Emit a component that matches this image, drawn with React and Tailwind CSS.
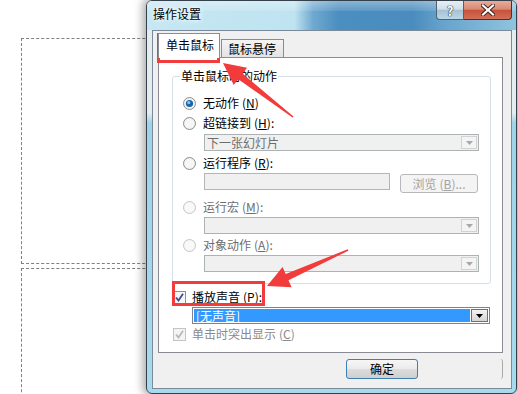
import React from 'react';

// small win7-style controls
function Radio({ checked, disabled }) {
  return (
    <svg width="13" height="13" viewBox="0 0 13 13" className="shrink-0">
      <circle cx="6.5" cy="6.5" r="6" fill={disabled ? '#f6f6f6' : '#eeeeee'} stroke={disabled ? '#c6c6c6' : '#8f8f8f'} />
      <circle cx="6.5" cy="6.5" r="4.6" fill={disabled ? '#f9f9f9' : '#f7f7f7'} />
      {checked && (
        <>
          <circle cx="6.5" cy="6.5" r="3.6" fill="#1a64a8" />
          <circle cx="5.8" cy="5.6" r="1.6" fill="#7ccaf2" />
        </>
      )}
    </svg>
  );
}

function Check({ disabled }) {
  return (
    <svg width="13" height="13" viewBox="0 0 13 13" className="shrink-0">
      <rect x="0.5" y="0.5" width="12" height="12" fill={disabled ? '#f4f4f4' : '#f6f6f6'} stroke={disabled ? '#c4c4c4' : '#8e8f8f'} />
      <path d="M3 6.5 L5.5 9.6 L10 2.8" fill="none" stroke={disabled ? '#b9b9b9' : '#3a4d8f'} strokeWidth="1.8" />
    </svg>
  );
}

function Tri({ color }) {
  return (
    <svg width="7" height="4" viewBox="0 0 7 4">
      <path d="M0 0 H7 L3.5 4 Z" fill={color} />
    </svg>
  );
}

function Combo({ text }) {
  return (
    <div className="ml-[31px] flex h-[17px] w-[275px] border border-[#adb2b5] bg-[#f0f0f0]">
      <div className="flex-1 pl-[2px] text-[12px] leading-[15px] text-[#6d6d6d]">{text}</div>
      <div className="m-px flex w-[16px] items-center justify-center border border-[#d2d2d2] bg-[#f4f4f4]">
        <Tri color="#a8a8a8" />
      </div>
    </div>
  );
}

function Key({ k }) {
  return (
    <span className="ml-[3px]">
      (<span className="underline">{k}</span>)
    </span>
  );
}

export default function App() {
  return (
    <div className="relative h-[394px] w-[518px] overflow-hidden bg-white font-['Noto_Sans_CJK_SC',sans-serif] text-[12px] text-black">
      {/* slide placeholders behind the dialog */}
      <div className="absolute left-[21px] top-[38px] h-[226px] w-[200px] border border-dashed border-[#808080]" />
      <div className="absolute left-[21px] top-[268px] h-[200px] w-[200px] border border-dashed border-[#808080]" />

      {/* dialog window */}
      <div className="absolute left-[146px] top-0 flex h-[394px] w-[371px] flex-col rounded-[6px] border border-[#34414b] [background-image:linear-gradient(180deg,#e4ecf0_0px,#e4ecf0_112px,#9ed3e8_122px,#a8daed_100%)] shadow-[0_0_10px_3px_rgba(0,0,0,0.35)]">
        {/* title bar */}
        <div className="relative flex h-[29px] justify-between rounded-t-[5px] [background-image:linear-gradient(90deg,#c6e7f3_0%,#bfe3f1_40%,#6fa9d0_45%,#4b8ec0_52%,#4a8cbe_72%,#66a3cc_80%,#8fc4de_100%)]">
          <div className="absolute inset-x-0 top-0 h-[10px] rounded-t-[5px] bg-[linear-gradient(180deg,rgba(255,255,255,0.35),rgba(255,255,255,0.1))]" />
          <div className="relative pl-[6px] pt-[6px] leading-[14px] [text-shadow:0_0_4px_#ffffff,0_0_6px_#ffffff]">操作设置</div>
          <div className="relative mr-[4px] flex h-[19px]">
            <div className="flex w-[28px] items-center justify-center rounded-bl-[4px] border border-t-0 border-[#4f6272] bg-[linear-gradient(180deg,#e6eff4_0%,#cfe0ea_45%,#a5c2d4_52%,#bcd6e5_100%)] text-[13px] font-bold leading-[15px] text-white [text-shadow:0_0_1px_#23323d,0_0_1px_#23323d,0_0_1px_#23323d]">
              ?
            </div>
            <div className="flex w-[48px] items-center justify-center rounded-br-[4px] border border-l-0 border-t-0 border-[#5b2b22] bg-[linear-gradient(180deg,#eaaa9a_0%,#da8a76_45%,#c7533a_52%,#d26f57_100%)]">
              <svg width="14" height="12" viewBox="0 0 14 12">
                <path d="M2 1.5 L12 10.5 M12 1.5 L2 10.5" stroke="#3b1f1a" strokeWidth="4" strokeLinecap="square" />
                <path d="M2 1.5 L12 10.5 M12 1.5 L2 10.5" stroke="#ffffff" strokeWidth="2.2" strokeLinecap="square" />
              </svg>
            </div>
          </div>
        </div>

        {/* client area */}
        <div className="ml-[5px] mr-[4px] h-[359px] border border-[#7a8a99] bg-[#f0f0f0]">
          {/* tabs */}
          <div className="flex h-[26px] items-end gap-px pl-[5px] pt-[2px]">
            <div className="relative z-10 -mb-px h-[25px] w-[62px] border border-b-0 border-[#898c95] bg-white pl-[7px] pt-[4px] leading-[14px]">
              单击鼠标
            </div>
            <div className="h-[18px] w-[63px] border border-b-0 border-[#898c95] bg-[linear-gradient(180deg,#f4f4f4,#e3e3e3)] pl-[6px] pt-[2px] leading-[14px]">
              鼠标悬停
            </div>
          </div>

          {/* tab page */}
          <div className="ml-[5px] h-[296px] w-[345px] border border-[#898c95] bg-white">
            <div className="relative ml-[13px] mt-[18px] h-[208px] w-[319px] rounded-[3px] border border-[#d5dfe5]">
              <div className="absolute -top-[8px] left-[7px] bg-white px-px leading-[14px]">单击鼠标时的动作</div>
              <div className="flex flex-col pt-[16px]">
                <div className="flex h-[20px] items-center gap-[7px] pl-[10px]">
                  <Radio checked />
                  <span className="leading-[14px]">无动作<Key k="N" /></span>
                </div>
                <div className="flex h-[20px] items-center gap-[7px] pl-[10px]">
                  <Radio />
                  <span className="leading-[14px]">超链接到<Key k="H" />:</span>
                </div>
                <div className="mt-px">
                  <Combo text="下一张幻灯片" />
                </div>
                <div className="mt-[2px] flex h-[20px] items-center gap-[7px] pl-[10px]">
                  <Radio />
                  <span className="leading-[14px]">运行程序<Key k="R" />:</span>
                </div>
                <div className="ml-[31px] flex h-[20px] gap-[10px]">
                  <div className="h-[17px] w-[186px] border border-[#b5b5b5] bg-[#f0f0f0]" />
                  <div className="mt-px flex h-[19px] w-[78px] items-center justify-center rounded-[3px] border border-[#b5b9bc] bg-[#f4f4f4] leading-[14px] text-[#a3a3a3]">
                    浏览<Key k="B" />...
                  </div>
                </div>
                <div className="mt-[4px] flex h-[20px] items-center gap-[7px] pl-[10px]">
                  <Radio disabled />
                  <span className="leading-[14px] text-[#6d6d6d]">运行宏<Key k="M" />:</span>
                </div>
                <Combo text="" />
                <div className="mt-px flex h-[20px] items-center gap-[7px] pl-[10px]">
                  <Radio disabled />
                  <span className="leading-[14px] text-[#6d6d6d]">对象动作<Key k="A" />:</span>
                </div>
                <Combo text="" />
              </div>
            </div>

            <div className="mt-[3px] flex h-[20px] items-center gap-[6px] pl-[14px]">
              <Check />
              <span className="leading-[14px]">播放声音<Key k="P" />:</span>
            </div>
            <div className="ml-[33px] flex h-[17px] w-[298px] border border-[#7f848c] bg-white p-px">
              <div className="flex-1 bg-[#3399ff] pl-[2px] leading-[13px] text-white">[无声音]</div>
              <div className="ml-px flex w-[17px] items-center justify-center border border-[#707070] bg-[linear-gradient(180deg,#f3f3f3,#d5d5d5)]">
                <Tri color="#000000" />
              </div>
            </div>
            <div className="flex h-[20px] items-center gap-[6px] pl-[14px]">
              <Check disabled />
              <span className="leading-[14px] text-[#8a8a8a]">单击时突出显示<Key k="C" /></span>
            </div>
          </div>

          {/* buttons */}
          <div className="mt-[6px] flex gap-[8px] pl-[193px]">
            <div className="flex h-[20px] w-[72px] items-center justify-center rounded-[3px] border border-[#3c7fb1] bg-[linear-gradient(180deg,#f6f6f6_0%,#ebebeb_48%,#dcdcdc_52%,#cfcfcf_100%)] leading-[14px]">
              确定
            </div>
            <div className="h-[20px] w-[77px] rounded-r-[3px] border-r border-[#a9a9a9]" />
          </div>
        </div>
      </div>

      {/* red annotations */}
      <div className="absolute left-[157px] top-[33px] h-[30px] w-[63px] border-[3px] border-[#f23b3b]" />
      <div className="absolute left-[172px] top-[281px] h-[25px] w-[93px] border-[3px] border-[#f23b3b]" />
      <svg className="pointer-events-none absolute left-0 top-0" width="518" height="394" viewBox="0 0 518 394">
        <polygon
          points="223,63 247.1,67.7 242.5,73.6 293.5,116.4 292.5,117.6 238.3,79.2 233.7,85.1"
          fill="#f23b3b"
        />
        <polygon
          points="267,286 282.6,267.1 285.7,273.9 347.7,249.3 348.3,250.7 288.5,280.3 291.6,287.2"
          fill="#f23b3b"
        />
      </svg>
    </div>
  );
}
